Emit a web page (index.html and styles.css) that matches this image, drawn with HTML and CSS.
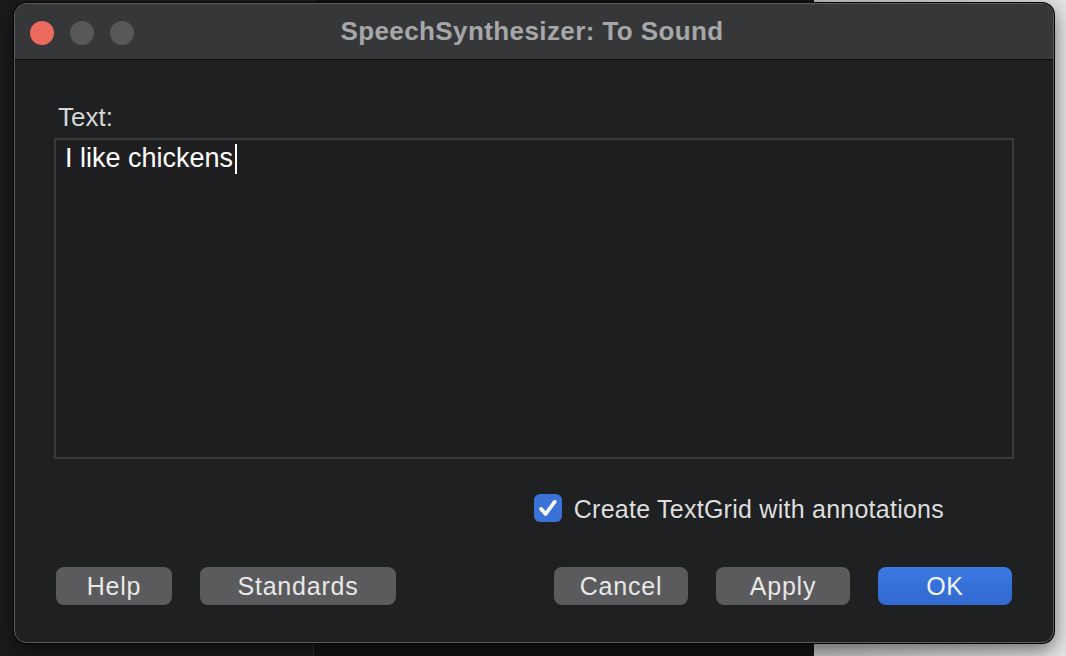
FILE: index.html
```html
<!DOCTYPE html>
<html lang="en">
<head>
<meta charset="utf-8">
<title>SpeechSynthesizer: To Sound</title>
<link rel="stylesheet" href="styles.css">
</head>
<body>
<div class="window">
  <div class="titlebar">
    <div class="lights">
      <span class="light close"></span>
      <span class="light"></span>
      <span class="light"></span>
    </div>
    <div class="title">SpeechSynthesizer: To Sound</div>
    <div></div>
  </div>
  <div class="content">
    <div class="label">Text:</div>
    <div class="textarea">I like chickens<span class="caret"></span></div>
    <div class="check-row">
      <span class="checkbox">
        <svg width="28" height="28" viewBox="0 0 28 28"><path d="M7 14.8 L11.6 20 L20.8 7.6" fill="none" stroke="#fff" stroke-width="3.6" stroke-linecap="round" stroke-linejoin="round"/></svg>
      </span>
      <span class="check-label">Create TextGrid with annotations</span>
    </div>
    <div class="buttons">
      <div class="group">
        <button class="btn btn-help">Help</button>
        <button class="btn btn-standards">Standards</button>
      </div>
      <div class="group">
        <button class="btn btn-std">Cancel</button>
        <button class="btn btn-std">Apply</button>
        <button class="btn btn-std btn-ok">OK</button>
      </div>
    </div>
  </div>
</div>
</body>
</html>
```
FILE: styles.css
```css
html, body {
  margin: 0;
  padding: 0;
}
body {
  width: 1066px;
  height: 656px;
  overflow: hidden;
  box-sizing: border-box;
  padding: 3px 0 0 14px;
  font-family: "Liberation Sans", Arial, sans-serif;
  background:
    linear-gradient(to right,
      #1b1b1d 0, #1b1b1d 313px,
      #2e2e30 313px, #2e2e30 314px,
      #131315 314px, #131315 814px,
      #c4c4c4 814px, #e4e4e4 1066px);
}
.window {
  width: 1040px;
  height: 640px;
  box-sizing: border-box;
  border: 1px solid #5c5c5e;
  border-radius: 12px;
  box-shadow: 0 0 0 1px #050505, 0 6px 20px rgba(0, 0, 0, 0.55);
  background: #1f2022;
  overflow: hidden;
  display: flex;
  flex-direction: column;
}
.titlebar {
  height: 56px;
  flex: none;
  box-sizing: border-box;
  background: #363739;
  border-bottom: 1px solid #0c0c0d;
  display: grid;
  grid-template-columns: 1fr auto 1fr;
  align-items: center;
}
.lights {
  display: flex;
  gap: 16px;
  padding-left: 15px;
  padding-top: 2px;
}
.light {
  width: 24px;
  height: 24px;
  border-radius: 50%;
  background: #58585a;
}
.light.close {
  background: #ed6a5e;
}
.title {
  font-weight: bold;
  font-size: 26px;
  letter-spacing: 0.4px;
  color: #a7a7a9;
  padding-right: 4px;
}
.content {
  flex: 1;
  display: flex;
  flex-direction: column;
  padding: 0 39px;
}
.label {
  margin-top: 42px;
  font-size: 26px;
  line-height: 30px;
  color: #d6d6d6;
  padding-left: 4px;
}
.textarea {
  margin-top: 6px;
  height: 321px;
  box-sizing: border-box;
  border: 2px solid #3a3a3c;
  background: #1f1f21;
  color: #ffffff;
  font-size: 27px;
  line-height: 32px;
  padding: 2px 9px 0;
}
.caret {
  display: inline-block;
  width: 2px;
  height: 30px;
  background: #ffffff;
  vertical-align: -7px;
  margin-left: 2px;
}
.check-row {
  margin-top: 35px;
  height: 28px;
  display: flex;
  justify-content: flex-end;
  align-items: center;
  gap: 12px;
  padding-right: 70px;
}
.checkbox {
  width: 28px;
  height: 28px;
  border-radius: 6px;
  background: #3a72d8;
  display: flex;
  align-items: center;
  justify-content: center;
}
.check-label {
  font-size: 25px;
  letter-spacing: 0.25px;
  color: #dedede;
  padding-top: 2px;
}
.buttons {
  margin-top: 45px;
  display: flex;
  justify-content: space-between;
  padding: 0 2px;
}
.group {
  display: flex;
  gap: 28px;
}
.btn {
  height: 38px;
  border: none;
  border-radius: 8px;
  background: #5b5b5d;
  color: #e8e8e8;
  font-family: "Liberation Sans", Arial, sans-serif;
  font-size: 25px;
  letter-spacing: 0.8px;
  padding: 0;
  line-height: 38px;
}
.btn-help { width: 116px; }
.btn-standards { width: 196px; }
.btn-std { width: 134px; }
.btn-ok {
  background: linear-gradient(#3b79e0, #3169d0);
  color: #f2f2f2;
}
```
